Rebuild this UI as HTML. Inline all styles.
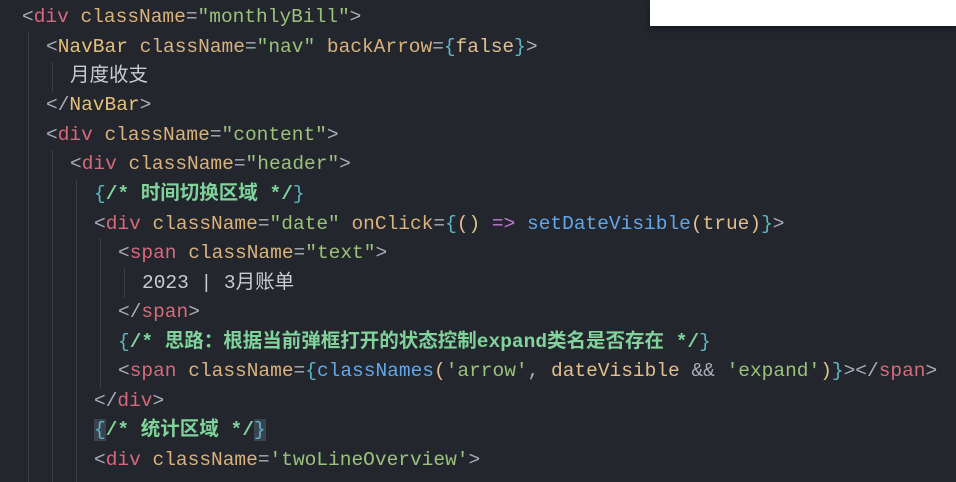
<!DOCTYPE html>
<html><head><meta charset="utf-8"><style>
html,body{margin:0;padding:0;}
body{width:956px;height:482px;background:#23262d;overflow:hidden;position:relative;font-family:"Liberation Mono","Noto Sans CJK SC",monospace;font-size:19.5px;color:#c9ccd3;}
.l{position:absolute;white-space:pre;line-height:24px;}
.t{color:#d7697c}.p{color:#a9aeb8}.a{color:#d9b27c}.s{color:#9bc27a}.c{color:#e4c07a}.b{color:#5ab8c4}.f{color:#62a8e8}.k{color:#c678dd}.cm{color:#80d39b;font-weight:bold}.v{color:#e2c08d}
.g{position:absolute;width:1px;background:#3a3e47;}
.box{position:absolute;left:650px;top:0;width:306px;height:26px;background:#fff;box-shadow:0 2px 6px rgba(0,0,0,.5);}
</style></head><body>
<div class="box"></div>
<div class="g" style="left:28px;top:32px;height:450px"></div>
<div class="g" style="left:52px;top:62px;height:30px"></div>
<div class="g" style="left:52px;top:150px;height:332px"></div>
<div class="g" style="left:76px;top:180px;height:302px"></div>
<div class="g" style="left:100px;top:238px;height:150px"></div>
<div class="g" style="left:124px;top:268px;height:30px"></div>
<div class="l" style="left:22px;top:5px"><span class="p">&lt;</span><span class="t">div</span> <span class="a">className</span><span class="p">=</span><span class="s">"monthlyBill"</span><span class="p">&gt;</span></div>
<div class="l" style="left:46px;top:35px"><span class="p">&lt;</span><span class="c">NavBar</span> <span class="a">className</span><span class="p">=</span><span class="s">"nav"</span> <span class="a">backArrow</span><span class="p">=</span><span class="b">{</span><span class="v">false</span><span class="b">}</span><span class="p">&gt;</span></div>
<div class="l" style="left:70px;top:64px">月度收支</div>
<div class="l" style="left:46px;top:93px"><span class="p">&lt;/</span><span class="c">NavBar</span><span class="p">&gt;</span></div>
<div class="l" style="left:46px;top:123px"><span class="p">&lt;</span><span class="t">div</span> <span class="a">className</span><span class="p">=</span><span class="s">"content"</span><span class="p">&gt;</span></div>
<div class="l" style="left:70px;top:152px"><span class="p">&lt;</span><span class="t">div</span> <span class="a">className</span><span class="p">=</span><span class="s">"header"</span><span class="p">&gt;</span></div>
<div class="l" style="left:94px;top:182px"><span class="b">{</span><span class="cm">/* 时间切换区域 */</span><span class="b">}</span></div>
<div class="l" style="left:94px;top:212px"><span class="p">&lt;</span><span class="t">div</span> <span class="a">className</span><span class="p">=</span><span class="s">"date"</span> <span class="a">onClick</span><span class="p">=</span><span class="b">{</span><span class="v">()</span> <span class="k">=&gt;</span> <span class="f">setDateVisible</span><span class="v">(true)</span><span class="b">}</span><span class="p">&gt;</span></div>
<div class="l" style="left:118px;top:241px"><span class="p">&lt;</span><span class="t">span</span> <span class="a">className</span><span class="p">=</span><span class="s">"text"</span><span class="p">&gt;</span></div>
<div class="l" style="left:142px;top:271px">2023 | 3月账单</div>
<div class="l" style="left:118px;top:300px"><span class="p">&lt;/</span><span class="t">span</span><span class="p">&gt;</span></div>
<div class="l" style="left:118px;top:330px"><span class="b">{</span><span class="cm">/* 思路：根据当前弹框打开的状态控制expand类名是否存在 */</span><span class="b">}</span></div>
<div class="l" style="left:118px;top:359px"><span class="p">&lt;</span><span class="t">span</span> <span class="a">className</span><span class="p">=</span><span class="b">{</span><span class="f">classNames</span><span class="v">(</span><span class="s">'arrow'</span><span class="p">,</span> <span class="v">dateVisible</span> <span class="p">&amp;&amp;</span> <span class="s">'expand'</span><span class="v">)</span><span class="b">}</span><span class="p">&gt;&lt;/</span><span class="t">span</span><span class="p">&gt;</span></div>
<div class="l" style="left:94px;top:389px"><span class="p">&lt;/</span><span class="t">div</span><span class="p">&gt;</span></div>
<div class="l" style="left:94px;top:418px"><span class="b" style="background:#3a4350">{</span><span class="cm">/* 统计区域 */</span><span class="b" style="background:#3a4350">}</span></div>
<div class="l" style="left:94px;top:448px"><span class="p">&lt;</span><span class="t">div</span> <span class="a">className</span><span class="p">=</span><span class="s">'twoLineOverview'</span><span class="p">&gt;</span></div>
</body></html>
